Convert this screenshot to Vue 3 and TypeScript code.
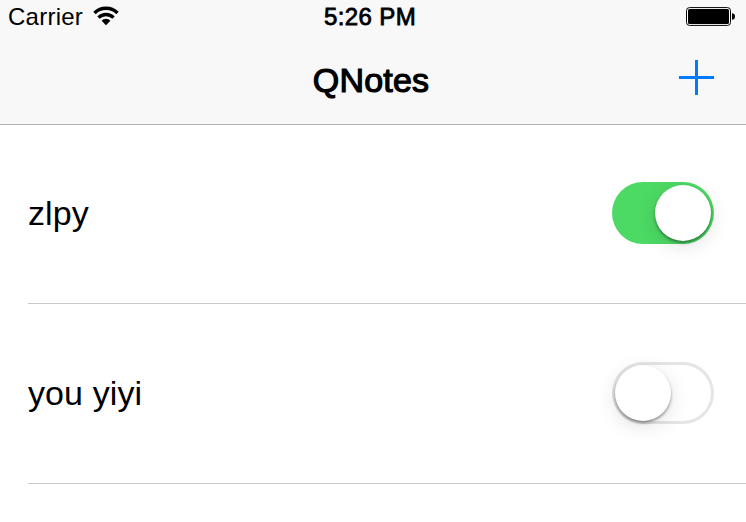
<script setup lang="ts">
import { ref } from 'vue'

interface Note {
  title: string
  enabled: boolean
}

const notes = ref<Note[]>([
  { title: 'zlpy', enabled: true },
  { title: 'you yiyi', enabled: false },
])
</script>

<template>
  <main class="screen">
    <header class="header">
      <div class="status">
        <div class="carrier">
          <span>Carrier</span>
          <svg class="wifi" width="26" height="20" viewBox="0 0 26 20">
            <path d="M1.5 7A16.4 16.4 0 0 1 24.5 7" />
            <path d="M5.5 11.6A10.6 10.6 0 0 1 20.5 11.6" />
            <path class="dot" d="M8.6 14.7A6 6 0 0 1 17.4 14.7L13 19.2Z" />
          </svg>
        </div>
        <time class="time">5:26 PM</time>
        <svg class="battery" width="50" height="20" viewBox="0 0 50 20">
          <rect x="0.5" y="0.6" width="44" height="17.8" rx="3" fill="#fff" stroke="#000" />
          <rect x="2" y="2" width="41" height="15" rx="1.6" />
          <path d="M46 6.2C48 6.2 49 7.5 49 9.5S48 12.8 46 12.8Z" />
        </svg>
      </div>
      <nav class="nav">
        <h1 class="title">QNotes</h1>
        <button class="add" aria-label="Add note">
          <svg width="35" height="35" viewBox="0 0 35 35">
            <path d="M0 17.5H35M17.5 0V35" stroke="#007aff" stroke-width="3" />
          </svg>
        </button>
      </nav>
    </header>
    <ul class="list">
      <li v-for="note in notes" :key="note.title" class="row">
        <span class="name">{{ note.title }}</span>
        <button
          class="toggle"
          :class="{ on: note.enabled }"
          role="switch"
          :aria-checked="note.enabled"
          @click="note.enabled = !note.enabled"
        >
          <span class="knob"></span>
        </button>
      </li>
    </ul>
  </main>
</template>

<style>
body {
  margin: 0;
  background: #fff;
}
</style>

<style scoped>
.screen {
  height: 522px;
  overflow: hidden;
  background: #fff;
  color: #000;
  font-family: 'Liberation Sans', Arial, sans-serif;
}
.header {
  box-sizing: border-box;
  height: 125px;
  background: #f8f8f8;
  border-bottom: 1px solid #b2b2b2;
}
.status {
  display: grid;
  grid-template-columns: 1fr auto 1fr;
  height: 40px;
  padding: 0 10px 0 4px;
  font-size: 24px;
  line-height: 34px;
}
.carrier {
  display: flex;
  gap: 10px;
  padding-left: 4px;
  letter-spacing: 0.25px;
}
.wifi {
  margin-top: 6px;
  fill: none;
  stroke: #000;
  stroke-width: 3.4;
}
.wifi .dot {
  fill: #000;
  stroke: none;
}
.time {
  letter-spacing: 0.4px;
  -webkit-text-stroke: 0.8px #000;
}
.battery {
  margin-top: 7px;
  justify-self: end;
}
.nav {
  display: grid;
  grid-template-columns: 1fr auto 1fr;
  align-items: start;
  height: 84px;
  padding: 0 32px 0 28px;
}
.title {
  grid-column: 2;
  margin: 20px 0 0;
  font-size: 34px;
  font-weight: 400;
  line-height: 40px;
  letter-spacing: 0.2px;
  -webkit-text-stroke: 1.2px #000;
}
.add {
  justify-self: end;
  margin-top: 20px;
  padding: 0;
  border: 0;
  background: none;
}
.add svg {
  display: block;
}
.list {
  margin: 0;
  padding: 0 0 0 28px;
  list-style: none;
}
.row {
  box-sizing: border-box;
  display: flex;
  align-items: center;
  justify-content: space-between;
  height: 180px;
  padding: 0 32px 1px 0;
  border-bottom: 1px solid #c8c8c8;
}
.row:first-child {
  height: 179px;
  padding-bottom: 2px;
}
.name {
  font-size: 34px;
  line-height: 40px;
  letter-spacing: 0.1px;
}
.toggle {
  box-sizing: border-box;
  display: flex;
  width: 102px;
  height: 62px;
  padding: 3px;
  border: 0;
  border-radius: 31px;
  background: #fff;
  box-shadow: inset 0 0 0 3px #e5e5e5;
}
.toggle.on {
  justify-content: flex-end;
  background: #4cd964;
  box-shadow: none;
}
.knob {
  width: 56px;
  height: 56px;
  border-radius: 50%;
  background: #fff;
  box-shadow: 0 5px 20px rgba(0, 0, 0, 0.12), 0 2px 3px rgba(0, 0, 0, 0.38);
}
</style>
